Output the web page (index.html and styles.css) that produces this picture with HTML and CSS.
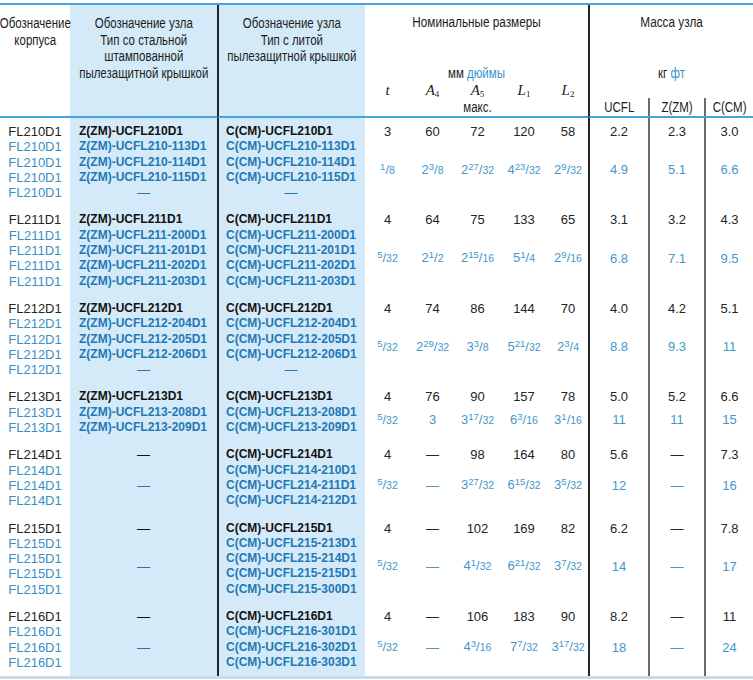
FILE: index.html
```html
<!DOCTYPE html>
<html lang="ru">
<head>
<meta charset="utf-8">
<title>Корпуса FL</title>
<link rel="stylesheet" href="styles.css">
</head>
<body>
<table class="spec">
  <colgroup>
    <col class="w-c1"><col class="w-c2"><col class="w-c3">
    <col class="w-t"><col class="w-a4"><col class="w-a5"><col class="w-l1"><col class="w-l2">
    <col class="w-m1"><col class="w-m2"><col class="w-m3">
  </colgroup>
  <thead>
    <tr>
      <th class="h-plain"><div class="nar"><div class="nar-in">Обозначение<br>корпуса</div></div></th>
      <th class="h-plain hl"><div class="nar"><div class="nar-in">Обозначение узла<br>Тип со стальной<br>штампованной<br>пылезащитной крышкой</div></div></th>
      <th class="h-plain hl sep"><div class="nar"><div class="nar-in">Обозначение узла<br>Тип с литой<br>пылезащитной крышкой</div></div></th>
      <th colspan="5" class="h-group">
        <div class="hg">
          <div class="hg-title">Номинальные размеры</div>
          <div class="hg-units">мм <span class="blue">дюймы</span></div>
          <div class="syms">
            <span class="sym"><i>t</i></span>
            <span class="sym"><i>A</i><sub>4</sub></span>
            <span class="sym"><i>A</i><sub>5</sub></span>
            <span class="sym"><i>L</i><sub>1</sub></span>
            <span class="sym"><i>L</i><sub>2</sub></span>
            <span></span><span></span><span class="maks">макс.</span><span></span><span></span>
          </div>
        </div>
      </th>
      <th colspan="3" class="h-group sep">
        <div class="hg">
          <div class="hg-title">Масса узла</div>
          <div class="hg-units">кг <span class="blue">фт</span></div>
          <div class="types">
            <span><span class="nx">UCFL</span></span><span class="tsub"><span class="nx">Z(ZM)</span></span><span class="tsub"><span class="nx">C(CM)</span></span>
          </div>
        </div>
      </th>
    </tr>
  </thead>

  <tbody>
    <tr class="first">
      <td class="c1">FL210D1</td>
      <td class="c2 hl">Z(ZM)-UCFL210D1</td>
      <td class="c3 hl sep">C(CM)-UCFL210D1</td>
      <td>3</td><td>60</td><td>72</td><td>120</td><td>58</td>
      <td class="sep">2.2</td><td class="sub">2.3</td><td class="sub">3.0</td>
    </tr>
    <tr class="rest">
      <td class="c1"><div>FL210D1</div><div>FL210D1</div><div>FL210D1</div><div>FL210D1</div></td>
      <td class="c2 hl"><div>Z(ZM)-UCFL210-113D1</div><div>Z(ZM)-UCFL210-114D1</div><div>Z(ZM)-UCFL210-115D1</div><div class="ctr">—</div></td>
      <td class="c3 hl sep"><div>C(CM)-UCFL210-113D1</div><div>C(CM)-UCFL210-114D1</div><div>C(CM)-UCFL210-115D1</div><div class="ctr">—</div></td>
      <td><span class="n">1</span>/<span class="d">8</span></td>
      <td>2<span class="n">3</span>/<span class="d">8</span></td>
      <td>2<span class="n">27</span>/<span class="d">32</span></td>
      <td>4<span class="n">23</span>/<span class="d">32</span></td>
      <td>2<span class="n">9</span>/<span class="d">32</span></td>
      <td class="sep">4.9</td><td class="sub">5.1</td><td class="sub">6.6</td>
    </tr>
  </tbody>

  <tbody>
    <tr class="first">
      <td class="c1">FL211D1</td>
      <td class="c2 hl">Z(ZM)-UCFL211D1</td>
      <td class="c3 hl sep">C(CM)-UCFL211D1</td>
      <td>4</td><td>64</td><td>75</td><td>133</td><td>65</td>
      <td class="sep">3.1</td><td class="sub">3.2</td><td class="sub">4.3</td>
    </tr>
    <tr class="rest">
      <td class="c1"><div>FL211D1</div><div>FL211D1</div><div>FL211D1</div><div>FL211D1</div></td>
      <td class="c2 hl"><div>Z(ZM)-UCFL211-200D1</div><div>Z(ZM)-UCFL211-201D1</div><div>Z(ZM)-UCFL211-202D1</div><div>Z(ZM)-UCFL211-203D1</div></td>
      <td class="c3 hl sep"><div>C(CM)-UCFL211-200D1</div><div>C(CM)-UCFL211-201D1</div><div>C(CM)-UCFL211-202D1</div><div>C(CM)-UCFL211-203D1</div></td>
      <td><span class="n">5</span>/<span class="d">32</span></td>
      <td>2<span class="n">1</span>/<span class="d">2</span></td>
      <td>2<span class="n">15</span>/<span class="d">16</span></td>
      <td>5<span class="n">1</span>/<span class="d">4</span></td>
      <td>2<span class="n">9</span>/<span class="d">16</span></td>
      <td class="sep">6.8</td><td class="sub">7.1</td><td class="sub">9.5</td>
    </tr>
  </tbody>

  <tbody>
    <tr class="first">
      <td class="c1">FL212D1</td>
      <td class="c2 hl">Z(ZM)-UCFL212D1</td>
      <td class="c3 hl sep">C(CM)-UCFL212D1</td>
      <td>4</td><td>74</td><td>86</td><td>144</td><td>70</td>
      <td class="sep">4.0</td><td class="sub">4.2</td><td class="sub">5.1</td>
    </tr>
    <tr class="rest">
      <td class="c1"><div>FL212D1</div><div>FL212D1</div><div>FL212D1</div><div>FL212D1</div></td>
      <td class="c2 hl"><div>Z(ZM)-UCFL212-204D1</div><div>Z(ZM)-UCFL212-205D1</div><div>Z(ZM)-UCFL212-206D1</div><div class="ctr">—</div></td>
      <td class="c3 hl sep"><div>C(CM)-UCFL212-204D1</div><div>C(CM)-UCFL212-205D1</div><div>C(CM)-UCFL212-206D1</div><div class="ctr">—</div></td>
      <td><span class="n">5</span>/<span class="d">32</span></td>
      <td>2<span class="n">29</span>/<span class="d">32</span></td>
      <td>3<span class="n">3</span>/<span class="d">8</span></td>
      <td>5<span class="n">21</span>/<span class="d">32</span></td>
      <td>2<span class="n">3</span>/<span class="d">4</span></td>
      <td class="sep">8.8</td><td class="sub">9.3</td><td class="sub">11</td>
    </tr>
  </tbody>

  <tbody>
    <tr class="first">
      <td class="c1">FL213D1</td>
      <td class="c2 hl">Z(ZM)-UCFL213D1</td>
      <td class="c3 hl sep">C(CM)-UCFL213D1</td>
      <td>4</td><td>76</td><td>90</td><td>157</td><td>78</td>
      <td class="sep">5.0</td><td class="sub">5.2</td><td class="sub">6.6</td>
    </tr>
    <tr class="rest">
      <td class="c1"><div>FL213D1</div><div>FL213D1</div></td>
      <td class="c2 hl"><div>Z(ZM)-UCFL213-208D1</div><div>Z(ZM)-UCFL213-209D1</div></td>
      <td class="c3 hl sep"><div>C(CM)-UCFL213-208D1</div><div>C(CM)-UCFL213-209D1</div></td>
      <td><span class="n">5</span>/<span class="d">32</span></td>
      <td>3</td>
      <td>3<span class="n">17</span>/<span class="d">32</span></td>
      <td>6<span class="n">3</span>/<span class="d">16</span></td>
      <td>3<span class="n">1</span>/<span class="d">16</span></td>
      <td class="sep">11</td><td class="sub">11</td><td class="sub">15</td>
    </tr>
  </tbody>

  <tbody>
    <tr class="first">
      <td class="c1">FL214D1</td>
      <td class="c2 hl ctr">—</td>
      <td class="c3 hl sep">C(CM)-UCFL214D1</td>
      <td>4</td><td>—</td><td>98</td><td>164</td><td>80</td>
      <td class="sep">5.6</td><td class="sub">—</td><td class="sub">7.3</td>
    </tr>
    <tr class="rest">
      <td class="c1"><div>FL214D1</div><div>FL214D1</div><div>FL214D1</div></td>
      <td class="c2 hl ctr mid">—</td>
      <td class="c3 hl sep"><div>C(CM)-UCFL214-210D1</div><div>C(CM)-UCFL214-211D1</div><div>C(CM)-UCFL214-212D1</div></td>
      <td><span class="n">5</span>/<span class="d">32</span></td>
      <td>—</td>
      <td>3<span class="n">27</span>/<span class="d">32</span></td>
      <td>6<span class="n">15</span>/<span class="d">32</span></td>
      <td>3<span class="n">5</span>/<span class="d">32</span></td>
      <td class="sep">12</td><td class="sub">—</td><td class="sub">16</td>
    </tr>
  </tbody>

  <tbody>
    <tr class="first">
      <td class="c1">FL215D1</td>
      <td class="c2 hl ctr">—</td>
      <td class="c3 hl sep">C(CM)-UCFL215D1</td>
      <td>4</td><td>—</td><td>102</td><td>169</td><td>82</td>
      <td class="sep">6.2</td><td class="sub">—</td><td class="sub">7.8</td>
    </tr>
    <tr class="rest">
      <td class="c1"><div>FL215D1</div><div>FL215D1</div><div>FL215D1</div><div>FL215D1</div></td>
      <td class="c2 hl ctr mid">—</td>
      <td class="c3 hl sep"><div>C(CM)-UCFL215-213D1</div><div>C(CM)-UCFL215-214D1</div><div>C(CM)-UCFL215-215D1</div><div>C(CM)-UCFL215-300D1</div></td>
      <td><span class="n">5</span>/<span class="d">32</span></td>
      <td>—</td>
      <td>4<span class="n">1</span>/<span class="d">32</span></td>
      <td>6<span class="n">21</span>/<span class="d">32</span></td>
      <td>3<span class="n">7</span>/<span class="d">32</span></td>
      <td class="sep">14</td><td class="sub">—</td><td class="sub">17</td>
    </tr>
  </tbody>

  <tbody>
    <tr class="first">
      <td class="c1">FL216D1</td>
      <td class="c2 hl ctr">—</td>
      <td class="c3 hl sep">C(CM)-UCFL216D1</td>
      <td>4</td><td>—</td><td>106</td><td>183</td><td>90</td>
      <td class="sep">8.2</td><td class="sub">—</td><td class="sub">11</td>
    </tr>
    <tr class="rest">
      <td class="c1"><div>FL216D1</div><div>FL216D1</div><div>FL216D1</div></td>
      <td class="c2 hl ctr mid">—</td>
      <td class="c3 hl sep"><div>C(CM)-UCFL216-301D1</div><div>C(CM)-UCFL216-302D1</div><div>C(CM)-UCFL216-303D1</div></td>
      <td><span class="n">5</span>/<span class="d">32</span></td>
      <td>—</td>
      <td>4<span class="n">3</span>/<span class="d">16</span></td>
      <td>7<span class="n">7</span>/<span class="d">32</span></td>
      <td>3<span class="n">17</span>/<span class="d">32</span></td>
      <td class="sep">18</td><td class="sub">—</td><td class="sub">24</td>
    </tr>
  </tbody>
</table>
</body>
</html>
```

FILE: styles.css
```css
html, body {
  margin: 0;
  padding: 0;
  background: #ffffff;
}

body {
  font-family: "Liberation Sans", Arial, sans-serif;
  color: #1f1f1f;
}

.spec {
  width: 753px;
  table-layout: fixed;
  border-collapse: separate;
  border-spacing: 0;
  margin-top: 3px;
  border-top: 2px solid #46a3dc;
  border-bottom: 3px solid #c6dcec;
}

.w-c1 { width: 70px; }
.w-c2 { width: 147px; }
.w-c3 { width: 148px; }
.w-t  { width: 45px; }
.w-a4 { width: 45px; }
.w-a5 { width: 45px; }
.w-l1 { width: 48px; }
.w-l2 { width: 40px; }
.w-m1 { width: 60px; }
.w-m2 { width: 56px; }
.w-m3 { width: 49px; }

.spec th,
.spec td {
  padding: 0;
}

/* ---------- header ---------- */
.spec th {
  font-family: "Liberation Sans", Arial, sans-serif;
  font-weight: normal;
  font-size: 14px;
  line-height: 16.7px;
  color: #1c1c1c;
  text-align: center;
  vertical-align: top;
  border-bottom: 2px solid #46a3dc;
}

.spec th.h-plain {
  padding-top: 10px;
}

/* condensed header lettering */
.nar {
  display: flex;
  justify-content: center;
}

.nar-in {
  flex-shrink: 0;
  white-space: nowrap;
  text-align: center;
  transform: scaleX(0.82);
}

.nx {
  display: inline-block;
  white-space: nowrap;
  transform: scaleX(0.82);
}

.hg {
  height: 111px;
  display: flex;
  flex-direction: column;
}

.hg-title {
  padding-top: 9px;
  line-height: 17px;
  white-space: nowrap;
  transform: scaleX(0.84);
}

.hg-units {
  margin-top: 34px;
  line-height: 17px;
  white-space: nowrap;
  transform: scaleX(0.82);
}

.blue {
  color: #3592cc;
}

.syms {
  display: grid;
  grid-template-columns: 45px 45px 45px 48px 40px;
  grid-template-rows: 16px 18px;
}

.sym {
  font-family: "Liberation Serif", "Times New Roman", serif;
  font-size: 15px;
  line-height: 16px;
}

.sym sub {
  font-style: normal;
  font-size: 9px;
  vertical-align: -2px;
  line-height: 0;
}

.maks {
  line-height: 18px;
  transform: scaleX(0.82);
}

.types {
  margin-top: 16px;
  display: grid;
  grid-template-columns: 58px 56px 49px;
  height: 18px;
  line-height: 18px;
}

.tsub {
  border-left: 2px solid #6b6b6b;
}

/* ---------- body ---------- */
.spec td {
  font-size: 13px;
  line-height: 15.3px;
  text-align: center;
  vertical-align: middle;
  color: #242424;
}

.hl {
  background: #d5eaf8;
}

.sep {
  border-left: 2px solid #262626;
}

.sub {
  border-left: 2px solid #6b6b6b;
}

.first td {
  padding-top: 6px;
}

.rest td {
  padding-bottom: 6px;
  color: #4497cb;
}

.rest td.c1,
.rest td.c2,
.rest td.c3 {
  vertical-align: top;
}

.c1 {
  color: #222;
}

.rest td.c1 {
  color: #3b8fc6;
}

.spec td.c2,
.spec td.c3 {
  font-weight: bold;
  font-size: 12px;
  text-align: left;
  color: #111;
}

.spec td.c2 {
  padding-left: 9px;
}

.spec td.c3 {
  padding-left: 7px;
}

.rest td.c2,
.rest td.c3 {
  color: #1e79b6;
}

.ctr {
  text-align: center;
  font-weight: normal;
  font-size: 13px;
}

.spec td.c2.ctr {
  padding-left: 0;
  text-align: center;
  font-weight: normal;
  font-size: 13px;
}

.rest .c2 .ctr,
.rest .c3 .ctr {
  padding-right: 9px;
}

.rest td.mid {
  vertical-align: middle;
}

.n {
  font-size: 9.5px;
  vertical-align: 4px;
  line-height: 0;
}

.d {
  font-size: 10.5px;
}
```
